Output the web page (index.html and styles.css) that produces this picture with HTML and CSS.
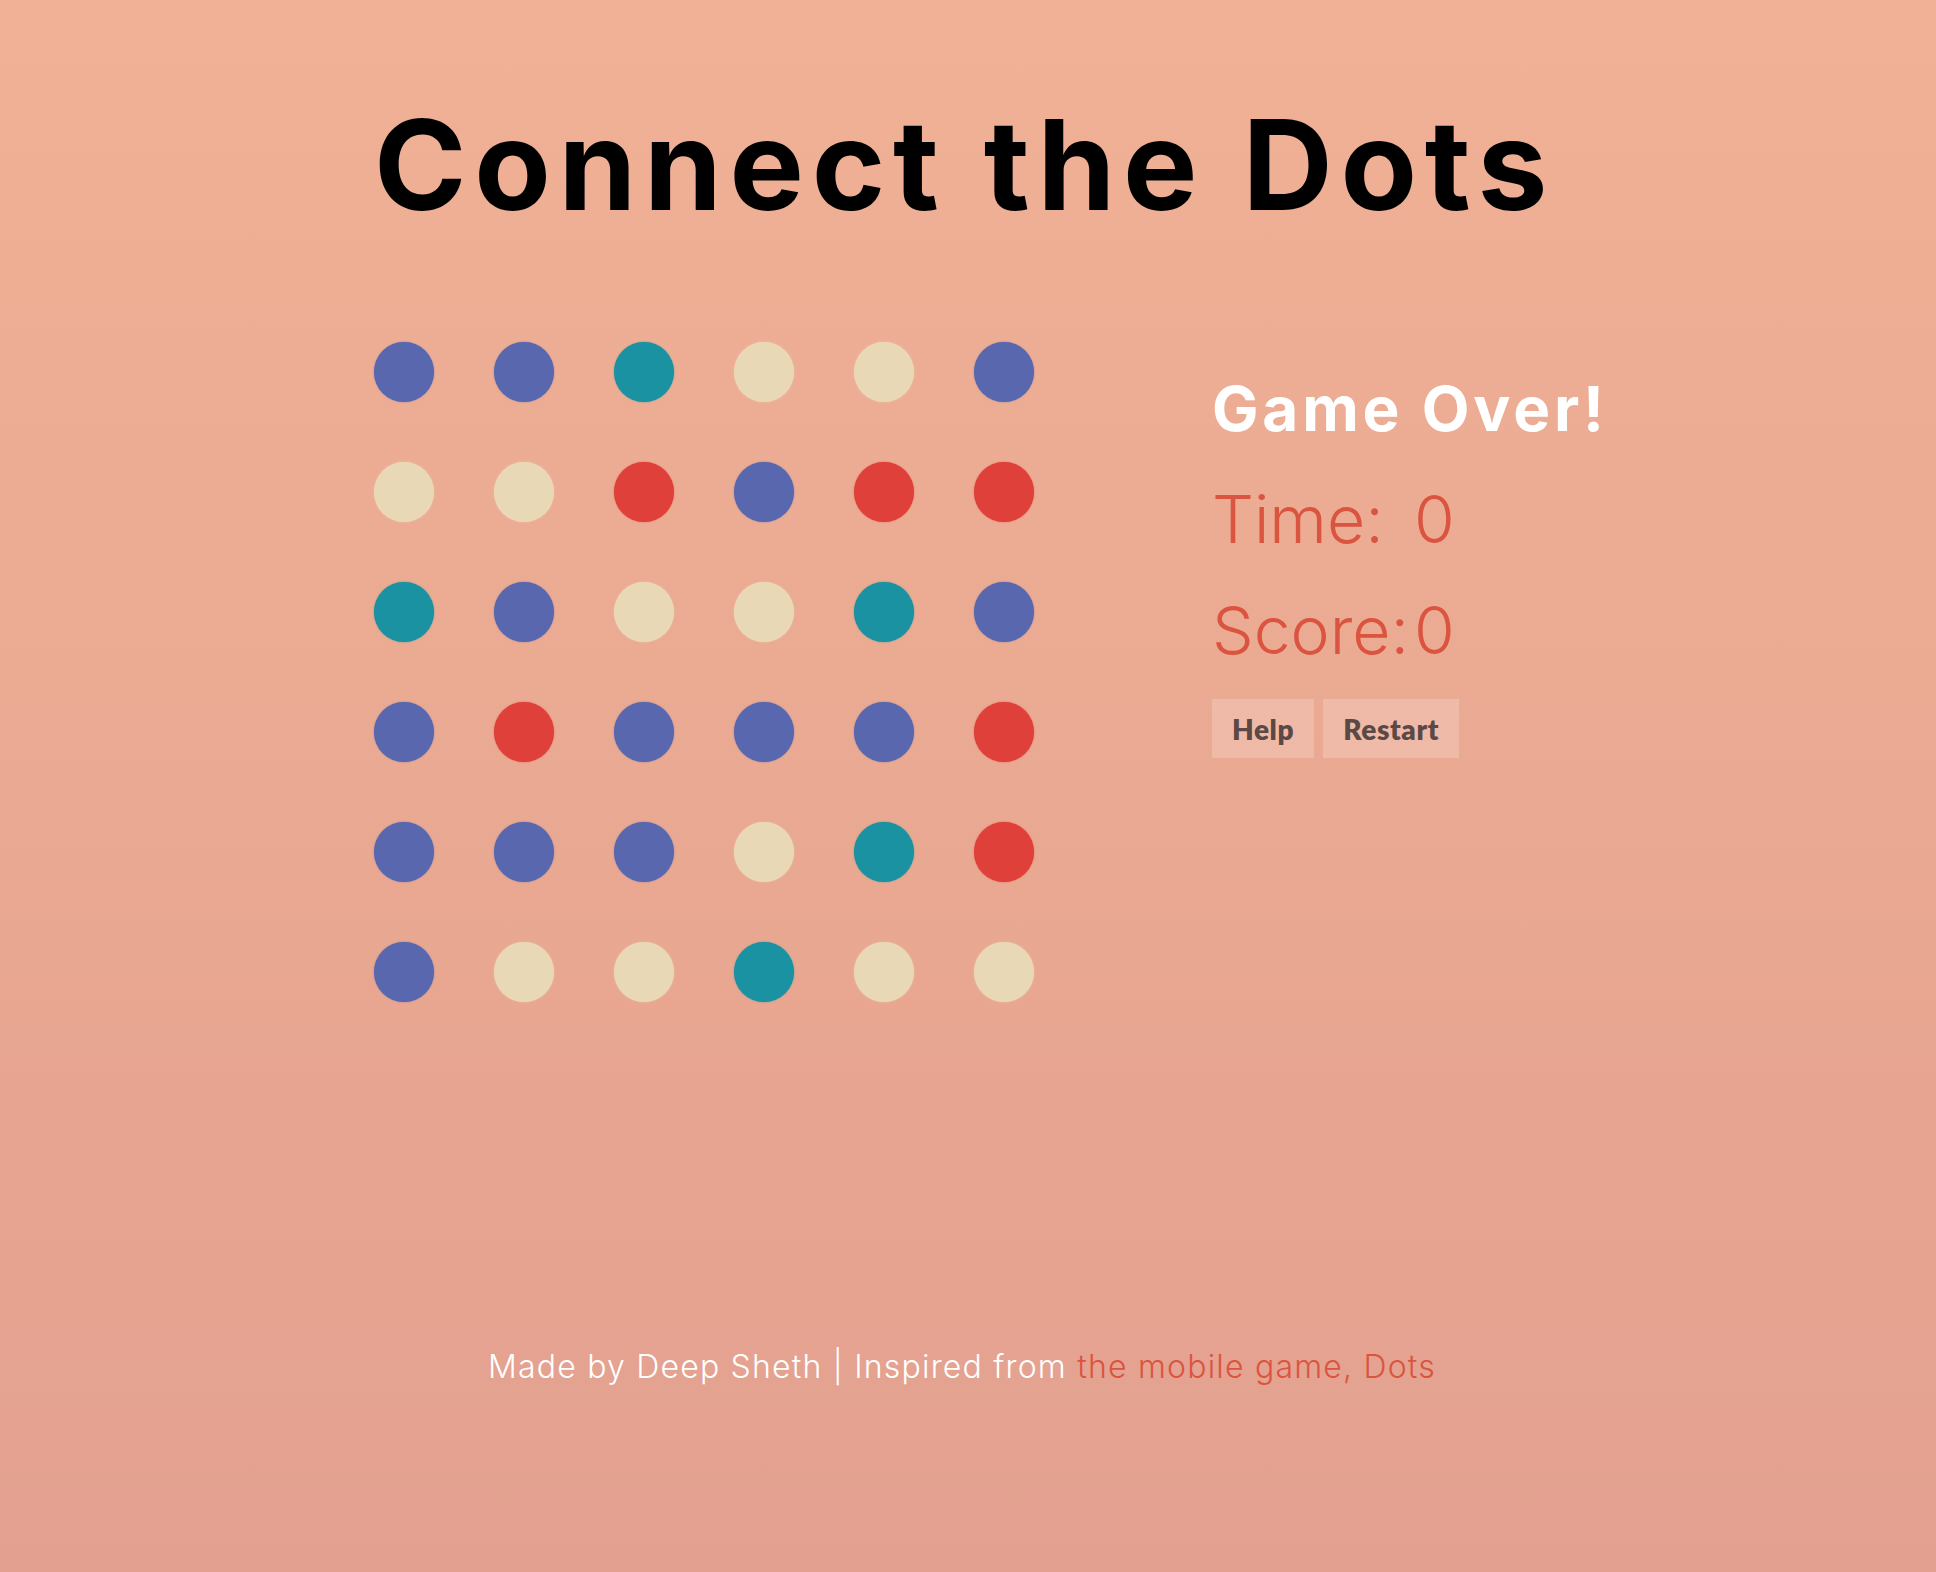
FILE: index.html
```html
<!DOCTYPE html>
<html lang="en">
<head>
<meta charset="utf-8">
<title>Connect the Dots</title>
<link rel="stylesheet" href="styles.css">
</head>
<body>
<div class="page">
  <h1 class="title">Connect the Dots</h1>
  <div class="game">
    <div class="board">
      <span class="dot blue"></span><span class="dot blue"></span><span class="dot teal"></span><span class="dot cream"></span><span class="dot cream"></span><span class="dot blue"></span>
      <span class="dot cream"></span><span class="dot cream"></span><span class="dot red"></span><span class="dot blue"></span><span class="dot red"></span><span class="dot red"></span>
      <span class="dot teal"></span><span class="dot blue"></span><span class="dot cream"></span><span class="dot cream"></span><span class="dot teal"></span><span class="dot blue"></span>
      <span class="dot blue"></span><span class="dot red"></span><span class="dot blue"></span><span class="dot blue"></span><span class="dot blue"></span><span class="dot red"></span>
      <span class="dot blue"></span><span class="dot blue"></span><span class="dot blue"></span><span class="dot cream"></span><span class="dot teal"></span><span class="dot red"></span>
      <span class="dot blue"></span><span class="dot cream"></span><span class="dot cream"></span><span class="dot teal"></span><span class="dot cream"></span><span class="dot cream"></span>
    </div>
    <div class="panel">
      <h2 class="status">Game Over!</h2>
      <div class="stats">
        <span class="label">Time:</span><span class="value">0</span>
        <span class="label">Score:</span><span class="value">0</span>
      </div>
      <div class="buttons">
        <button class="btn">Help</button>
        <button class="btn">Restart</button>
      </div>
    </div>
  </div>
  <footer class="footer">Made by Deep Sheth | Inspired from <a class="link" href="#">the mobile game, Dots</a></footer>
</div>
</body>
</html>
```

FILE: styles.css
```css
html, body {
  margin: 0;
  padding: 0;
}
body {
  min-height: 1572px;
  background: linear-gradient(to bottom, #f0b196 0%, #eaa992 50%, #e3a090 100%);
  font-family: Inter, "Liberation Sans", sans-serif;
}
.page {
  width: 1176px;
  margin: 0 auto;
  padding-right: 12px;
}
.title {
  margin: 0;
  padding-top: 102px;
  font-size: 125px;
  line-height: 1;
  font-weight: 700;
  letter-spacing: 7.7px;
  white-space: nowrap;
  color: #000;
}
.game {
  display: flex;
  margin-top: 115px;
  gap: 178px;
}
.board {
  flex: none;
  display: grid;
  grid-template-columns: repeat(6, 60px);
  grid-auto-rows: 60px;
  gap: 60px;
}
.dot {
  display: block;
  width: 60px;
  height: 60px;
  border-radius: 50%;
}
.blue { background: #5968ae; box-shadow: 0 0 1.5px #5968ae; }
.teal { background: #1a92a1; box-shadow: 0 0 1.5px #1a92a1; }
.cream { background: #e9d8b6; box-shadow: 0 0 1.5px #e9d8b6; }
.red { background: #e0403a; box-shadow: 0 0 1.5px #e0403a; }
.panel {
  flex: none;
  display: flex;
  flex-direction: column;
  align-items: flex-start;
}
.status {
  margin: 36px 0 0;
  font-size: 62px;
  line-height: 1;
  font-weight: 700;
  letter-spacing: 3.8px;
  white-space: nowrap;
  color: #fff;
}
.stats {
  display: grid;
  grid-template-columns: 202px auto;
  row-gap: 45px;
  margin-top: 46px;
  font-size: 66px;
  line-height: 1;
  font-weight: 300;
  color: #da5440;
}
.buttons {
  display: flex;
  gap: 9px;
  margin-top: 36px;
}
.btn {
  height: 59px;
  padding: 0 20px;
  border: 0;
  background: rgba(255, 255, 255, 0.2);
  color: #5c4844;
  font-family: Lato, "DejaVu Sans", sans-serif;
  font-weight: 800;
  font-size: 28px;
  letter-spacing: 0.6px;
}
.footer {
  margin-top: 349px;
  text-align: center;
  font-size: 32px;
  line-height: 1;
  font-weight: 300;
  letter-spacing: 1.2px;
  color: #fff;
}
.link {
  color: #da5440;
  text-decoration: none;
}
```
